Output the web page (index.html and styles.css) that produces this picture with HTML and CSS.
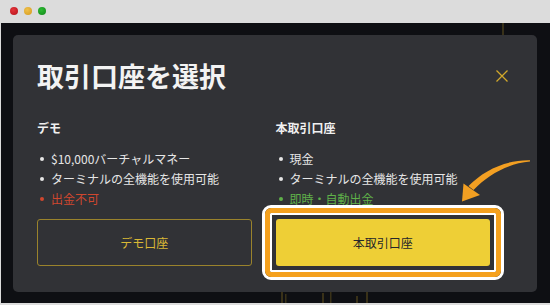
FILE: index.html
```html
<!DOCTYPE html>
<html lang="ja">
<head>
<meta charset="utf-8">
<title>取引口座を選択</title>
<link rel="stylesheet" href="styles.css">
</head>
<body>
<div class="window">
  <div class="titlebar">
    <span class="light red"></span>
    <span class="light yellow"></span>
    <span class="light green"></span>
  </div>
  <div class="stage">
    <svg class="chart" width="549" height="280" viewBox="1 23 549 280" aria-hidden="true">
      <g fill="#b8962a" opacity="0.25">
        <rect x="502" y="23" width="2" height="12"/>
        <rect x="281" y="292" width="2" height="11"/>
        <rect x="285" y="294" width="1.5" height="9"/>
        <rect x="322" y="293" width="2" height="10"/>
        <rect x="330" y="292" width="1.5" height="11"/>
        <rect x="356" y="296" width="2" height="7"/>
        <rect x="366" y="292" width="2" height="11"/>
      </g>
    </svg>
    <div class="modal">
      <div class="modal-head">
        <h1 class="title">取引口座を選択</h1>
        <button class="close" aria-label="閉じる">
          <svg width="12" height="12" viewBox="0 0 12 12"><path d="M0.5 0.5 L11.5 11.5 M11.5 0.5 L0.5 11.5" stroke="#d1a82b" stroke-width="1.3" fill="none"/></svg>
        </button>
      </div>
      <div class="cols">
        <div class="col">
          <h2 class="col-title">デモ</h2>
          <ul class="features">
            <li>$10,000バーチャルマネー</li>
            <li>ターミナルの全機能を使用可能</li>
            <li class="neg">出金不可</li>
          </ul>
          <button class="btn btn-outline">デモ口座</button>
        </div>
        <div class="col">
          <h2 class="col-title">本取引口座</h2>
          <ul class="features">
            <li>現金</li>
            <li>ターミナルの全機能を使用可能</li>
            <li class="pos">即時・自動出金</li>
          </ul>
          <div class="hl">
            <button class="btn btn-fill">本取引口座</button>
          </div>
        </div>
      </div>
      <svg class="arrow" width="72" height="46" viewBox="458 158 72 46" aria-hidden="true">
        <path d="M530 160.3 C506 159.8 484 170 468.5 186 L473.5 190 C488 175 507 163.8 530 161.6 Z" fill="#f29f22"/>
        <polygon points="462,201.5 463.5,183.5 480,195" fill="#f29f22"/>
      </svg>
    </div>
  </div>
</div>
</body>
</html>
```

FILE: styles.css
```css
* { box-sizing: border-box; }

html, body {
  margin: 0;
  padding: 0;
}

body {
  width: 550px;
  height: 305px;
  overflow: hidden;
  background: #dcdcdc;
  font-family: "Noto Sans CJK JP", "Noto Sans", sans-serif;
}

.window {
  width: 550px;
  height: 305px;
}

.titlebar {
  height: 23px;
  display: flex;
  align-items: center;
  gap: 6px;
  padding-left: 10px;
  padding-bottom: 1px;
  background: #dcdcdc;
}

.light {
  width: 8px;
  height: 8px;
  border-radius: 50%;
}
.light.red { background: radial-gradient(circle at 40% 35%, #e4343a, #b3121a); }
.light.yellow { background: radial-gradient(circle at 40% 35%, #f0c04a, #d39a1e); }
.light.green { background: radial-gradient(circle at 40% 35%, #2cbb32, #12861a); }

.stage {
  position: relative;
  margin-left: 1px;
  height: 280px;
  background: #0e0f13;
  padding: 12px 12px 0 12px;
}

.chart {
  position: absolute;
  left: 0;
  top: 0;
  z-index: 0;
}

.modal {
  position: relative;
  z-index: 1;
  width: 524px;
  height: 257px;
  background: #313236;
  border-radius: 5px;
  padding: 23px 47px 26px 24px;
}

.modal-head {
  display: flex;
  justify-content: space-between;
  align-items: center;
  height: 36px;
  margin-right: -18px;
}

.title {
  margin: 0;
  font-size: 27px;
  line-height: 36px;
  font-weight: 700;
  color: #f3f3f3;
}

.close {
  width: 12px;
  height: 12px;
  padding: 0;
  border: 0;
  background: none;
  display: block;
}
.close svg { display: block; }

.cols {
  display: grid;
  grid-template-columns: 1fr 1fr;
  column-gap: 24px;
  margin-top: 25px;
}

.col-title {
  margin: 0;
  font-size: 12px;
  line-height: 18px;
  font-weight: 700;
  color: #f0f0f0;
}

.features {
  list-style: none;
  margin: 12px 0 0;
  padding: 0;
}

.features li {
  display: flex;
  align-items: center;
  font-size: 12px;
  line-height: 20px;
  height: 20px;
  color: #e6e6e6;
  white-space: nowrap;
}

.features li::before {
  content: "";
  width: 4px;
  height: 4px;
  border-radius: 50%;
  background: currentColor;
  margin-left: 3px;
  margin-right: 7px;
  flex: none;
}

.features li.neg { color: #d0472f; }
.features li.pos { color: #5fb049; }

.btn {
  display: block;
  width: 100%;
  height: 47px;
  margin-top: 10px;
  font-family: inherit;
  font-size: 12px;
  border-radius: 3px;
  padding: 0;
}

.btn-outline {
  background: transparent;
  border: 1px solid #9a832c;
  color: #d9b835;
}

.hl {
  position: relative;
  margin-top: 10px;
}

.hl .btn { margin-top: 0; }

.btn-fill {
  background: #eecf36;
  border: 0;
  color: #25262a;
}

.hl::before {
  content: "";
  position: absolute;
  left: -14px;
  top: -14px;
  right: -14px;
  bottom: -14px;
  border: 3px solid #ffffff;
  border-radius: 9px;
  pointer-events: none;
}

.hl::after {
  content: "";
  position: absolute;
  left: -11px;
  top: -11px;
  right: -11px;
  bottom: -11px;
  border: 5px solid #f5a11e;
  border-radius: 6px;
  box-shadow: inset 0 0 0 2px #ffffff;
  pointer-events: none;
}

.arrow {
  position: absolute;
  left: 445px;
  top: 123px;
}
```
